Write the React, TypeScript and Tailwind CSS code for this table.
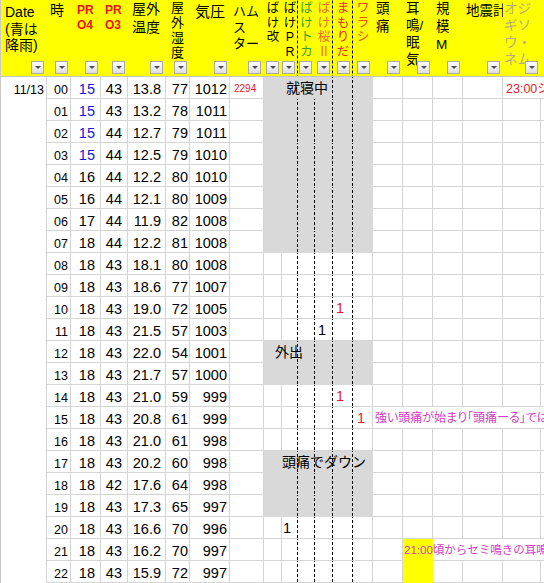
import React from 'react';

type RowT = [string, number, number, string, number, number];

const ROWS: RowT[] = [
  ['00', 15, 43, '13.8', 77, 1012],
  ['01', 15, 43, '13.2', 78, 1011],
  ['02', 15, 44, '12.7', 79, 1011],
  ['03', 15, 44, '12.5', 79, 1010],
  ['04', 16, 44, '12.2', 80, 1010],
  ['05', 16, 44, '12.1', 80, 1009],
  ['06', 17, 44, '11.9', 82, 1008],
  ['07', 18, 44, '12.2', 81, 1008],
  ['08', 18, 43, '18.1', 80, 1008],
  ['09', 18, 43, '18.6', 77, 1007],
  ['10', 18, 43, '19.0', 72, 1005],
  ['11', 18, 43, '21.5', 57, 1003],
  ['12', 18, 43, '22.0', 54, 1001],
  ['13', 18, 43, '21.7', 57, 1000],
  ['14', 18, 43, '21.0', 59, 999],
  ['15', 18, 43, '20.8', 61, 999],
  ['16', 18, 43, '21.0', 61, 998],
  ['17', 18, 43, '20.2', 60, 998],
  ['18', 18, 42, '17.6', 64, 998],
  ['19', 18, 43, '17.3', 65, 997],
  ['20', 18, 43, '16.6', 70, 996],
  ['21', 18, 43, '16.2', 70, 997],
  ['22', 18, 43, '15.9', 72, 997],
];

const GRAY = new Set([0, 1, 2, 3, 4, 5, 6, 7, 12, 13, 17, 18, 19]);

const RED = 'text-[#e8182c]';
const MAG = 'text-[#d53bc3]';
const GL = 'border-[#d4d4d4]';
const GRAYCELL = 'bg-[#d9d9d9] border-[#d9d9d9]';
const DASH = 'bg-[linear-gradient(to_bottom,#000_3px,transparent_3px)] bg-[length:1px_5px] bg-repeat-y bg-right';

function FilterBtn() {
  return (
    <div className="absolute right-[3px] bottom-[2px] w-[13px] h-[13px] border border-[#a9a9a9] bg-[linear-gradient(to_bottom,#ffffff,#dedede)] flex items-center justify-center">
      <div className="w-0 h-0 border-x-[3px] border-x-transparent border-t-[3px] border-t-[#4d4d4d]" />
    </div>
  );
}

function Lines({ items }: { items: string[] }) {
  return (
    <>
      {items.map((t, k) => (
        <div key={k}>{t}</div>
      ))}
    </>
  );
}

function Header() {
  return (
    <div className="flex h-[77px] bg-[#ffff00] border-b border-[#c4c4c4]">
      <div className="relative shrink-0 w-[46px] pl-[4px] pt-[4px] text-[14px] leading-[16.5px]">
        <Lines items={['Date', '(青は', '降雨)']} />
        <FilterBtn />
      </div>
      <div className="relative shrink-0 w-[24px] pl-[3px] pt-[1px] text-[14px] leading-[18px]">
        時
        <FilterBtn />
      </div>
      <div className="relative shrink-0 w-[30px] pl-[6px] pt-[3px] font-bold text-[12px] leading-[15px] text-[#e8141c]">
        <Lines items={['PR', 'O4']} />
        <FilterBtn />
      </div>
      <div className="relative shrink-0 w-[27px] pl-[4px] pt-[3px] font-bold text-[12px] leading-[15px] text-[#e8141c]">
        <Lines items={['PR', 'O3']} />
        <FilterBtn />
      </div>
      <div className="relative shrink-0 w-[38px] pl-[4px] pt-[1px] text-[14px] leading-[17.5px]">
        <Lines items={['屋外', '温度']} />
        <FilterBtn />
      </div>
      <div className="relative shrink-0 w-[24px] pl-[5px] text-[13px] leading-[15px]">
        <Lines items={['屋', '外', '湿', '度']} />
        <FilterBtn />
      </div>
      <div className="relative shrink-0 w-[40px] text-center pt-[4px] text-[15px] leading-[16px]">
        気圧
        <FilterBtn />
      </div>
      <div className="relative shrink-0 w-[34px] pl-[3px] pt-[4px] text-[13px] leading-[16px]">
        <Lines items={['ハム', 'ス', 'ター']} />
        <FilterBtn />
      </div>
      <div className="relative shrink-0 w-[18px] text-center pt-[1px] text-[12.5px] leading-[14.5px]">
        <Lines items={['ば', 'け', '改']} />
        <FilterBtn />
      </div>
      <div className={`relative shrink-0 w-[16px] text-center pt-[1px] text-[12.5px] leading-[14.5px] ${DASH}`}>
        <Lines items={['ば', 'け', 'P', 'R']} />
        <FilterBtn />
      </div>
      <div className="relative shrink-0 w-[17px] text-center pt-[1px] text-[12.5px] leading-[14.5px] text-[#34a034]">
        <Lines items={['ば', 'け', 'ト', 'カ']} />
        <FilterBtn />
      </div>
      <div className={`relative shrink-0 w-[18px] text-center pt-[1px] text-[12.5px] leading-[14.5px] text-[#f26b3a] ${DASH}`}>
        <Lines items={['ば', 'け', '桜', 'Ⅱ']} />
        <FilterBtn />
      </div>
      <div className={`relative shrink-0 w-[20px] text-center pt-[1px] text-[12.5px] leading-[14.5px] text-[#e8283c] ${DASH}`}>
        <Lines items={['ま', 'も', 'り', 'だ']} />
        <FilterBtn />
      </div>
      <div className="relative shrink-0 w-[20px] text-center pt-[1px] text-[12.5px] leading-[14.5px] text-[#f04a1e]">
        <Lines items={['ワ', 'ラ', 'シ']} />
        <FilterBtn />
      </div>
      <div className="relative shrink-0 w-[30px] pl-[3px] text-[13.5px] leading-[18px]">
        <Lines items={['頭', '痛']} />
        <FilterBtn />
      </div>
      <div className="relative shrink-0 w-[30px] pl-[3px] text-[13.5px] leading-[17px]">
        <Lines items={['耳', '鳴/', '眠', '気']} />
        <FilterBtn />
      </div>
      <div className="relative shrink-0 w-[30px] pl-[3px] text-[13.5px] leading-[18px]">
        <Lines items={['規', '模', 'M']} />
        <FilterBtn />
      </div>
      <div className="relative shrink-0 w-[40px] pl-[3px] pt-[2px] text-[13.5px] leading-[18px] overflow-hidden whitespace-nowrap">
        地震計
        <FilterBtn />
      </div>
      <div className="relative shrink-0 w-[38px] pl-[1px] text-[13.5px] leading-[17px] text-[#b3ad86]">
        <Lines items={['オジ', 'ギソ', 'ウ・', 'ネム']} />
        <FilterBtn />
      </div>
      <div className="flex-1" />
    </div>
  );
}

function Row({ d, i }: { d: RowT; i: number }) {
  const [h, c, dd, e, f, g] = d;
  const gray = GRAY.has(i);
  const num = `shrink-0 h-full flex items-center justify-end pt-[4px] border-r border-b ${GL} text-[14.5px] leading-[17px]`;
  const small = 'shrink-0 h-full flex items-center pt-[1px] border-b text-[14.5px] leading-[17px]';
  const covered = i === 15 || i === 21;
  const yellow = i >= 21;

  let iText: React.ReactNode = null;
  if (i === 0) iText = <span className="ml-[22px]">就寝中</span>;
  if (i === 12) iText = <span className="ml-[11px]">外出</span>;
  if (i === 17) iText = <span className="ml-[18px]">頭痛でダウン</span>;

  return (
    <div className="flex h-[22px]">
      <div className={`shrink-0 w-[46px] h-full flex items-center justify-end pr-[2px] pt-[4px] border-r ${GL} text-[12.5px] leading-[16px]`}>
        {i === 0 ? '11/13' : ''}
      </div>
      <div className={`shrink-0 w-[24px] h-full flex items-center justify-end pr-[2px] pt-[4px] border-r border-b ${GL} text-[12.5px] leading-[16px]`}>
        {h}
      </div>
      <div className={`${num} w-[30px] pr-[5px] ${i < 4 ? 'text-[#1414d8]' : ''}`}>{c}</div>
      <div className={`${num} w-[27px] pr-[5px]`}>{dd}</div>
      <div className={`${num} w-[38px] pr-[4px]`}>{e}</div>
      <div className={`${num} w-[24px] pr-[1px]`}>{f}</div>
      <div className={`${num} w-[40px] pr-[2px]`}>{g}</div>
      <div className={`shrink-0 w-[34px] h-full flex items-center pl-[4px] pt-[1px] border-r border-b ${GL} text-[10px] ${RED}`}>
        {i === 0 ? '2294' : ''}
      </div>
      <div className={`relative z-10 shrink-0 w-[18px] h-full flex items-center pt-[1px] border-r border-b whitespace-nowrap text-[14px] leading-[18px] ${gray ? GRAYCELL : GL}`}>
        {iText}
      </div>
      <div className={`${small} w-[16px] ${gray ? GRAYCELL : GL} ${i !== 0 ? DASH : ''}`}>
        {i === 20 ? <span className="ml-[1px]">1</span> : null}
      </div>
      <div className={`${small} w-[17px] ${gray ? GRAYCELL : GL} ${i !== 0 ? DASH : ''}`} />
      <div className={`${small} w-[18px] ${gray ? GRAYCELL : GL} ${DASH}`}>
        {i === 11 ? <span className="ml-[3px]">1</span> : null}
      </div>
      <div className={`${small} w-[20px] ${gray ? GRAYCELL : GL} ${DASH}`}>
        {i === 10 || i === 14 ? <span className={`ml-[3px] ${RED}`}>1</span> : null}
      </div>
      <div className={`${small} w-[20px] border-r ${gray ? GRAYCELL : GL}`}>
        {i === 15 ? <span className={`ml-[4px] ${RED}`}>1</span> : null}
      </div>
      <div className={`relative z-10 shrink-0 w-[30px] h-full flex items-center pt-[1px] border-b whitespace-nowrap ${GL} ${i === 15 ? '' : 'border-r'}`}>
        {i === 15 ? (
          <span className={`ml-[2px] text-[12px] leading-[16px] [font-feature-settings:'palt'] ${MAG}`}>
            強い頭痛が始まり「頭痛ーる」では
          </span>
        ) : null}
      </div>
      <div className={`relative z-10 shrink-0 w-[30px] h-full flex items-center pt-[1px] border-b whitespace-nowrap ${yellow ? 'bg-[#ffff00] border-[#ffff00] border-r' : i === 15 ? GL : `${GL} border-r`}`}>
        {i === 21 ? (
          <span className={`ml-[1px] text-[11.5px] leading-[16px] ${MAG}`}>21:00頃からセミ鳴きの耳鳴り</span>
        ) : null}
      </div>
      <div className={`shrink-0 w-[30px] h-full border-b ${GL} ${covered ? '' : 'border-r'}`} />
      <div className={`shrink-0 w-[40px] h-full border-b ${GL} ${covered ? '' : 'border-r'}`} />
      <div className={`relative z-10 shrink-0 w-[38px] h-full flex items-center pt-[2px] border-b whitespace-nowrap ${GL} ${covered || i === 0 ? '' : 'border-r'}`}>
        {i === 0 ? <span className={`ml-[3px] text-[12.5px] leading-[16px] ${RED}`}>23:00シ</span> : null}
      </div>
      <div className={`flex-1 h-full border-b ${GL}`} />
    </div>
  );
}

export default function App() {
  return (
    <div className="w-[544px] h-[583px] overflow-hidden bg-white border-l border-[#c8c8c8] text-black font-['Liberation_Sans','Noto_Sans_CJK_JP',sans-serif]">
      <Header />
      {ROWS.map((d, i) => (
        <Row key={i} d={d} i={i} />
      ))}
    </div>
  );
}
